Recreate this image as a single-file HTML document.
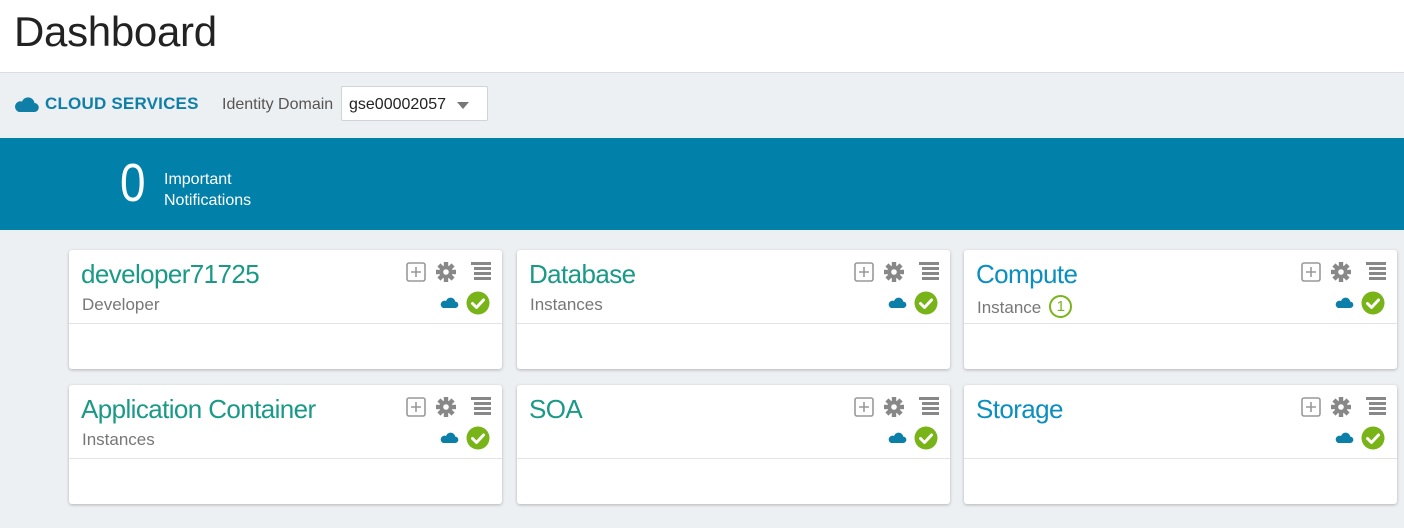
<!DOCTYPE html>
<html><head><meta charset="utf-8"><style>
*{margin:0;padding:0;box-sizing:border-box}
body{width:1404px;height:528px;overflow:hidden;background:#edf0f3;font-family:"Liberation Sans",sans-serif;position:relative}
.hdr{position:absolute;left:0;top:0;width:1404px;height:73px;background:#fff;border-bottom:1px solid #d8dde2}
.hdr h1{position:absolute;left:14px;top:8px;font-weight:300;font-size:42px;color:#222;letter-spacing:-0.3px}
.cs{position:absolute;left:14px;top:94px;font-weight:bold;font-size:17px;color:#0f7fa8;display:flex;align-items:center;gap:6px;letter-spacing:0.2px}
.idl{position:absolute;left:222px;top:96px;font-size:16px;color:#555}
.sel{position:absolute;left:341px;top:86px;width:147px;height:35px;background:#fff;border:1px solid #cfd4d8;border-radius:2px;font-size:16px;color:#222;padding:9px 0 0 7px}
.sel:after{content:"";position:absolute;right:18px;top:15px;border-left:6px solid transparent;border-right:6px solid transparent;border-top:7px solid #777}
.ban{position:absolute;left:0;top:138px;width:1404px;height:92px;background:#0180aa;color:#fff}
.zero{position:absolute;left:120px;top:14px;font-size:54px;font-weight:300;transform:scaleX(0.85);transform-origin:left}
.imp{position:absolute;left:164px;top:31px;font-size:16px;line-height:21px}
.card{position:absolute;width:433px;height:119px;background:#fff;border-radius:3px;box-shadow:0 1px 3px rgba(0,0,0,.25)}
.card .t{position:absolute;left:12px;top:9px;font-size:26px;font-weight:300;color:#1a9a86;letter-spacing:-0.6px}
.card.b .t{color:#0b8ec0}
.card .s{position:absolute;left:13px;top:45px;font-size:17px;color:#777}
.card .d{position:absolute;left:0;right:0;top:73px;border-top:1px solid #e3e3e3}
.card svg.ic{position:absolute;left:333px;top:11px}
.badge{display:inline-block;width:23px;height:23px;border:2px solid #7bb31a;border-radius:50%;color:#7bb31a;font-size:15px;text-align:center;line-height:19px;vertical-align:2px;margin-left:8px}
</style></head><body>
<div class="hdr"><h1>Dashboard</h1></div>
<div class="cs"><svg width="25" height="18" viewBox="0 0 25 18"><path d="M5 17h15a4.5 4.5 0 0 0 .5-9A6.5 6.5 0 0 0 8 6.5 5 5 0 0 0 5 17z" fill="#0f7fa8"/></svg>CLOUD SERVICES</div>
<div class="idl">Identity Domain</div>
<div class="sel">gse00002057</div>
<div class="ban"><div class="zero">0</div><div class="imp">Important<br>Notifications</div></div>

<svg width="0" height="0" style="position:absolute"><defs>
<g id="icons">
<rect x="71" y="2" width="18" height="18" rx="2" fill="none" stroke="#999" stroke-width="1.6"/>
<path d="M80 6v10M75 11h10" stroke="#999" stroke-width="1.6"/>
<g transform="translate(110 11)" fill="#888"><circle r="6.5"/><g id="tooth"><rect x="-2.2" y="-10" width="4.4" height="5"/></g><use href="#tooth" transform="rotate(45)"/><use href="#tooth" transform="rotate(90)"/><use href="#tooth" transform="rotate(135)"/><use href="#tooth" transform="rotate(180)"/><use href="#tooth" transform="rotate(225)"/><use href="#tooth" transform="rotate(270)"/><use href="#tooth" transform="rotate(315)"/><circle r="2.8" fill="#fff"/></g>
<g fill="#888"><rect x="135" y="1" width="20" height="3"/><rect x="138" y="6" width="17" height="3"/><rect x="138" y="11" width="17" height="3"/><rect x="138" y="16" width="17" height="3"/></g>
<path d="M107 47h12a3.2 3.2 0 0 0 .3-6.4A4.8 4.8 0 0 0 110 40a3.6 3.6 0 0 0-3 7z" fill="#0b7fa8"/>
<circle cx="142" cy="42" r="11.5" fill="#78b317"/>
<path d="M136.5 42.5l4 4 7-7.5" fill="none" stroke="#fff" stroke-width="3" stroke-linecap="round" stroke-linejoin="round"/>
</g></defs></svg>

<div class="card" style="left:69px;top:250px"><div class="t">developer71725</div><div class="s">Developer</div><div class="d"></div><svg class="ic" width="100" height="60" viewBox="66 0 100 60"><use href="#icons"/></svg></div>
<div class="card" style="left:517px;top:250px"><div class="t">Database</div><div class="s">Instances</div><div class="d"></div><svg class="ic" width="100" height="60" viewBox="66 0 100 60"><use href="#icons"/></svg></div>
<div class="card b" style="left:964px;top:250px"><div class="t">Compute</div><div class="s">Instance<span class="badge">1</span></div><div class="d"></div><svg class="ic" width="100" height="60" viewBox="66 0 100 60"><use href="#icons"/></svg></div>
<div class="card" style="left:69px;top:385px"><div class="t">Application Container</div><div class="s">Instances</div><div class="d"></div><svg class="ic" width="100" height="60" viewBox="66 0 100 60"><use href="#icons"/></svg></div>
<div class="card" style="left:517px;top:385px"><div class="t">SOA</div><div class="d"></div><svg class="ic" width="100" height="60" viewBox="66 0 100 60"><use href="#icons"/></svg></div>
<div class="card b" style="left:964px;top:385px"><div class="t">Storage</div><div class="d"></div><svg class="ic" width="100" height="60" viewBox="66 0 100 60"><use href="#icons"/></svg></div>
</body></html>
